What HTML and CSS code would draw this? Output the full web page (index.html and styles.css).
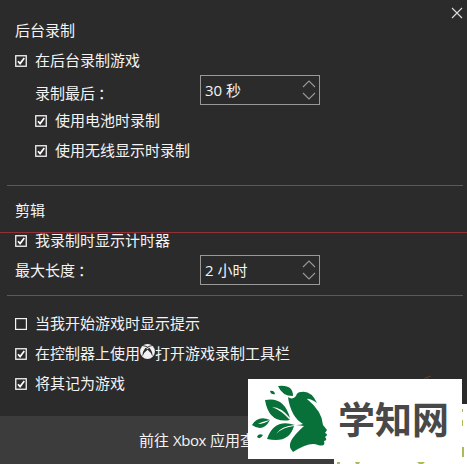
FILE: index.html
```html
<!DOCTYPE html>
<html lang="zh-CN">
<head>
<meta charset="utf-8">
<title>游戏录制设置</title>
<link rel="stylesheet" href="styles.css">
</head>
<body>
<svg class="defs" width="0" height="0">
  <symbol id="on" viewBox="0 0 12 12"><rect x=".75" y=".75" width="10.5" height="10.5" fill="none" stroke="#f4f4f4" stroke-width="1.3"/><path d="M3 6.2 5.1 8.6 9.3 3" fill="none" stroke="#fff" stroke-width="1.7"/></symbol>
  <symbol id="off" viewBox="0 0 12 12"><rect x=".6" y=".6" width="10.8" height="10.8" fill="none" stroke="#f4f4f4" stroke-width="1.2"/></symbol>
  <symbol id="spin" viewBox="0 0 14 20"><path d="M1 7 7 1 13 7M1 13 7 19 13 13" fill="none" stroke="#999" stroke-width="1.1"/></symbol>
</svg>
<main class="panel">
  <svg class="close" viewBox="0 0 12 12"><path d="M1 1 11 11M11 1 1 11" stroke="#ddd" stroke-width="1.1"/></svg>
  <section class="group recording">
    <h2 class="row">后台录制</h2>
    <label class="row"><svg class="box"><use href="#on"/></svg>在后台录制游戏</label>
    <div class="row field inset last"><span class="name">录制最后<span class="colon">：</span></span><div class="spinner"><span>30 秒</span><svg class="arrows"><use href="#spin"/></svg></div></div>
    <label class="row inset"><svg class="box"><use href="#on"/></svg>使用电池时录制</label>
    <label class="row inset"><svg class="box"><use href="#on"/></svg>使用无线显示时录制</label>
  </section>
  <section class="group clips">
    <h2 class="row">剪辑</h2>
    <label class="row"><svg class="box"><use href="#on"/></svg>我录制时显示计时器</label>
    <div class="row field"><span class="name">最大长度<span class="colon">：</span></span><div class="spinner"><span>2 小时</span><svg class="arrows"><use href="#spin"/></svg></div></div>
  </section>
  <section class="group options">
    <label class="row"><svg class="box"><use href="#off"/></svg>当我开始游戏时显示提示</label>
    <label class="row"><svg class="box"><use href="#on"/></svg>在控制器上使用<svg class="xbox" viewBox="0 0 15 15"><circle cx="7.5" cy="7.5" r="7.4" fill="#f2f2f2"/><path d="M3.2 1.8Q5.500 1.8 7.500 3.4 9.500 1.8 11.800 1.8" fill="none" stroke="#2b2b2b" stroke-width="1.1"/><path d="M5.600 3.800Q2.300 7.400 2.500 12.400 3.600 8.600 7.500 5.700 11.400 8.600 12.500 12.400 12.700 7.400 9.400 3.800L7.500 5.100Z" fill="#2b2b2b"/></svg>打开游戏录制工具栏</label>
    <label class="row"><svg class="box"><use href="#on"/></svg>将其记为游戏</label>
  </section>
  <footer class="footer">前往 <span class="latin">Xbox</span> 应用查</footer>
</main>
<div class="red-line"></div>
<svg class="spark" viewBox="0 0 16 8"><path d="M2 7Q5 3 11 2M6 7 8 4" fill="none" stroke="#5c4030" stroke-width="1"/></svg>
<div class="patch">
  <svg viewBox="0 0 140 60"><path d="M0 55h7v5H0z" fill="#3c3c3c"/><g fill="#a9bb5a"><path d="M10 58h3v2h-3zM28 58h5l-1 2h-3zM90 58h8l-2 2h-4zM135 5h1v3h-1zM135 16h1v6h-1zM135 43h2v10h-2z"/></g></svg>
</div>
<div class="brand">
  <svg class="leaf" viewBox="0 0 80 82" fill="#087039">
    <path d="M39 19.500Q43 22 46 18Q47 14 51 14Q61 12 67 25Q59 20 57 21Q72 33 73 47L77 52 75 55Q79 56 75 59Q78 62 74 63Q76 69 68 67Q60 63 43 74Q38 69 41 63Q44 57 54 48L46 47Q51 47 53 46Q41 39 38 19.500Z"/>
    <path d="M15 22Q34 18 40 40Q31 29 22 29Q31 32 40 42Q19 46 15 22Z"/>
    <path d="M17 61Q24 40 45 47Q31 48 26 56Q33 49 44 48Q39 66 17 61Z"/>
    <path d="M28 8Q43 6 43 18Q32 18 28 8ZM2 47Q8 37 20 42Q11 44 8 46Q14 46 20 42Q13 55 2 47ZM20 13Q24 12 25 16Q21 17 20 13ZM7 59Q8 55 13 57Q10 62 7 59Z"/>
  </svg>
  <span class="brand-name">学知网</span>
</div>
</body>
</html>
```

FILE: styles.css
```css
* { box-sizing: border-box; }
body {
  margin: 0;
  width: 467px;
  height: 464px;
  position: relative;
  overflow: hidden;
  background: #2b2b2b;
  color: #f4f4f4;
  font: 15px/20px "Noto Sans CJK SC", sans-serif;
}
.defs { position: absolute; }
svg { display: block; flex: none; }
.panel { height: 464px; display: flex; flex-direction: column; }
.close { position: absolute; top: 7px; left: 451px; width: 12px; height: 12px; }
.group { margin: 0 4px 0 7px; padding-left: 8px; }
.recording { height: 185px; padding-top: 15px; }
.clips { height: 110px; padding-top: 9px; border-top: 1px solid #5a5a5a; }
.options { height: 121px; padding-top: 12px; border-top: 1px solid #5a5a5a; }
.row { display: flex; align-items: center; height: 30px; margin: 0; font-size: 15px; font-weight: 400; white-space: nowrap; }
.inset { padding-left: 20px; }
.box { width: 12px; height: 12px; margin: 2px 8px 0 0; }
.xbox { width: 15px; height: 15px; margin-bottom: 3px; }
.name { width: 185px; }
.last .name { width: 165px; padding-top: 5px; }
.colon { padding-left: 3px; }
.spinner {
  width: 120px;
  height: 30px;
  padding: 0 3px 0 4px;
  border: 1px solid #999;
  display: flex;
  align-items: center;
  justify-content: space-between;
  font-family: "Open Sans", "Noto Sans CJK SC", sans-serif;
}
.arrows { width: 14px; height: 20px; }
.footer { height: 48px; padding-left: 139px; line-height: 48px; background: #3c3c3c; font-family: "Open Sans", "Noto Sans CJK SC", sans-serif; white-space: nowrap; }
.latin { letter-spacing: -.4px; }
.red-line { position: absolute; top: 231px; left: 0; width: 467px; height: 3px; background: linear-gradient(#4d202366 0 1px, #92303a 1px 2px, #48252166 2px); }
.spark { position: absolute; left: 420px; top: 374px; width: 16px; height: 8px; }
.patch { position: absolute; left: 327px; top: 404px; width: 140px; height: 60px; background: #fff; }
.brand { position: absolute; left: 248px; top: 379px; width: 214px; height: 80px; padding-left: 2px; display: flex; background: #fff; overflow: hidden; }
.leaf { width: 80px; height: 82px; margin-top: -1px; }
.brand-name { margin-left: 8px; color: #484848; font-size: 37px; font-weight: 700; line-height: 78px; }
```
